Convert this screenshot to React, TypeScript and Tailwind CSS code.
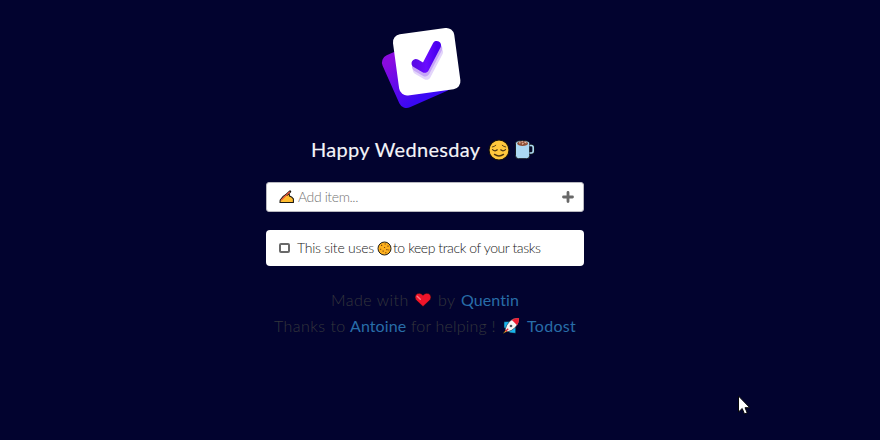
import React from "react";

function Logo() {
  return (
    <svg width="100" height="100" viewBox="0 0 100 100" className="block">
      <defs>
        <linearGradient id="back" x1="0" y1="0" x2="0.25" y2="1">
          <stop offset="0.15" stopColor="#8a0be0" />
          <stop offset="0.95" stopColor="#3a08f4" />
        </linearGradient>
        <linearGradient id="tick" x1="1" y1="0" x2="0" y2="0">
          <stop offset="0" stopColor="#4a00f0" />
          <stop offset="0.5" stopColor="#6a0cff" />
          <stop offset="1" stopColor="#5b08e8" />
        </linearGradient>
      </defs>
      <rect x="18.5" y="24.5" width="57" height="57" rx="8" fill="url(#back)" transform="rotate(-24 47 53)" />
      <rect x="25.8" y="10.8" width="61.8" height="61.8" rx="8" fill="#fff" transform="rotate(-7.7 56.7 41.7)" />
      <g fill="none" strokeWidth="8.6" strokeLinecap="round" strokeLinejoin="round">
        <path d="M47 50L56.5 55.5L68.8 32" stroke="#e3d5fb" />
        <path d="M46.3 47L55.3 52.2L68 28.5" stroke="#c6a6f6" />
        <path d="M45.8 43.3L54.7 48.5L66.8 25.2" stroke="url(#tick)" />
      </g>
    </svg>
  );
}

function Relieved() {
  return (
    <svg width="22" height="22" viewBox="0 0 22 22">
      <circle cx="11" cy="11" r="10" fill="#ffc83d" stroke="#17120a" strokeWidth="1.1" />
      <g fill="none" stroke="#4c3510" strokeWidth="1.2" strokeLinecap="round">
        <path d="M4.5 10.6Q7 12.8 9.3 10.8M12.7 10.8Q15 12.8 17.5 10.6" />
        <path d="M4.3 8Q6.2 7.8 7.8 6.3M14.2 6.3Q15.8 7.8 17.7 8" strokeWidth="0.9" />
        <path d="M6.5 15.4Q11 18.6 15.5 15.4" strokeWidth="1.4" />
      </g>
    </svg>
  );
}

function Cup() {
  return (
    <svg width="22" height="22" viewBox="0 0 22 22">
      <path d="M15.5 6.5H17.2Q19.2 6.5 19.2 8.5V12Q19.2 14 17.2 14H15.5" fill="none" stroke="#151a20" strokeWidth="3" />
      <path d="M1.5 4.2Q1.5 1.5 8.5 1.5Q15.7 1.5 15.7 4.2V16.6Q15.7 19.7 12.7 19.7H4.5Q1.5 19.7 1.5 16.6Z" fill="#acd9f3" stroke="#151a20" strokeWidth="1" />
      <path d="M15.5 6.5H17.2Q19.2 6.5 19.2 8.5V12Q19.2 14 17.2 14H15.5" fill="none" stroke="#acd9f3" strokeWidth="1.6" />
      <ellipse cx="8.6" cy="4.5" rx="5.4" ry="2.4" fill="#8e5036" />
      <path d="M5 4L6.5 3.6M8 5.2L9.5 4.3M10.5 3.3L12.5 4M7.5 2.8H9" stroke="#f0c2a9" strokeWidth="1.1" />
    </svg>
  );
}

function WritingHand() {
  return (
    <svg width="15" height="14" viewBox="0 0 15 14">
      <path d="M1 12.5L1.2 10L4.2 6.4Q6.5 4 9.3 4Q11 4.4 10.4 6L12.5 6.9L14.4 8.8V12.5Z" fill="#ffbd2e" stroke="#1b1812" strokeWidth="1.1" strokeLinejoin="round" />
      <path d="M7.5 4.8L11 1.6" stroke="#1b1812" strokeWidth="2.4" strokeLinecap="round" />
      <path d="M2 10.4L10.8 1.8" stroke="#e8543a" strokeWidth="1.3" />
    </svg>
  );
}

function Cookie() {
  return (
    <svg width="15" height="15" viewBox="0 0 15 15">
      <circle cx="7.5" cy="7.5" r="6.5" fill="#fdb01e" stroke="#252018" strokeWidth="1" />
      <g fill="#7d4812">
        <path d="M4 3.8h1.2v1.2H4zM7.6 2.6h1.2v1H7.6zM10.4 4.6h1.2v1.2h-1.2zM7 6h1.1v1H7zM3 7.8h1.2v1H3zM9.3 8h1.2v1.2H9.3zM5.6 9.6h1.1v1.1H5.6zM8.2 11.2h1.2v1H8.2zM11.3 8.5h.9v1h-.9z" />
      </g>
    </svg>
  );
}

function Heart() {
  return (
    <svg width="18" height="16" viewBox="0 0 18 16">
      <path d="M9 14.6L1.8 7.8Q.1 5 2 2.4Q5.7 -.2 9 3.2Q12.3 -.2 16 2.4Q17.9 5 16.2 7.8Z" fill="#f0142a" stroke="#150b12" strokeWidth="0.6" />
      <path d="M3.2 4.2L6.3 7.2" stroke="#ff7382" strokeWidth="1.4" strokeLinecap="round" />
    </svg>
  );
}

function Rocket() {
  return (
    <svg width="18" height="18" viewBox="0 0 18 18">
      <path d="M2 4.8L7.5 4.4L13.7 11V16.3L8 15.8L2 10.5Z" fill="#19b5ee" stroke="#10151c" strokeWidth="0.5" />
      <path d="M5 11.2L0.8 16.8L7 13.6Z" fill="#ffb32c" stroke="#10151c" strokeWidth="0.5" />
      <path d="M17 1Q11.5.5 7.6 4.4Q4 8.2 3.2 12.4L5.5 14.8Q9.8 13.9 13.4 10.3Q17.5 6 17 1Z" fill="#f5f4f2" stroke="#10151c" strokeWidth="0.5" />
      <path d="M17 1Q13 .7 9.8 2.9L15.2 8.2Q17.3 4.6 17 1Z" fill="#ee1b32" />
      <circle cx="9" cy="9" r="1.3" fill="#49515b" />
      <path d="M3.6 14.2L6.2 11.8" stroke="#e12636" strokeWidth="1.4" />
    </svg>
  );
}

export default function App() {
  return (
    <div className="relative h-[440px] w-[880px] overflow-hidden bg-[#02032f] font-['Lato',sans-serif]">
      <main className="ml-[266px] flex w-[318px] flex-col">
        <div className="ml-[104px] mt-5 h-[100px]">
          <Logo />
        </div>

        <h1 className="ml-[44px] mt-[16px] flex h-7 items-center text-[20px] font-normal leading-7 text-[#f4f4f8] [-webkit-text-stroke:0.15px_#f4f4f8]">
          <span className="mb-[2px] w-[178px] whitespace-nowrap pl-px tracking-[0.32px]">Happy Wednesday</span>
          <span className="w-[26px]"><Relieved /></span>
          <Cup />
        </h1>

        <div className="mt-[18px] flex h-[30px] items-center rounded-[3px] border border-[#b9b9c0] bg-white pl-[12px] pr-[9px]">
          <WritingHand />
          <span className="mb-px ml-[4px] flex-1 text-[14px] font-light leading-5 tracking-[-0.4px] text-[#757575]">Add item...</span>
          <svg width="12" height="12" viewBox="0 0 12 12"><path d="M6 1.5V10.5M1.5 6H10.5" stroke="#686868" strokeWidth="2.8" strokeLinecap="round" /></svg>
        </div>

        <div className="mt-[18px] flex h-9 items-center rounded-[4px] bg-white pl-[13px] text-[14px] font-light leading-5 tracking-[-0.42px] text-[#202020]">
          <span className="h-[10px] w-[11px] rounded-[2px] border-2 border-[#696969]" />
          <span className="ml-[7px] w-[80px] whitespace-nowrap tracking-[-0.25px]">This site uses</span>
          <Cookie />
          <span className="ml-px whitespace-nowrap">to keep track of your tasks</span>
        </div>

        <footer className="mt-[21px] text-[16px] font-light leading-[26px] text-[#35373c]">
          <div className="ml-[65px] flex h-[26px] items-center whitespace-nowrap">
            <span className="w-[83px] tracking-[0.5px]">Made with</span>
            <Heart />
            <span className="ml-[6px] w-[23px] tracking-[0.3px]">by</span>
            <a className="font-normal tracking-[0.1px] text-[#286da8]">Quentin</a>
          </div>
          <div className="ml-[8px] flex h-[26px] items-center whitespace-nowrap">
            <span className="w-[76px] tracking-[0.45px]">Thanks to</span>
            <a className="w-[61px] font-normal tracking-[0.1px] text-[#286da8]">Antoine</a>
            <span className="w-[91px] tracking-[0.2px]">for helping !</span>
            <Rocket />
            <a className="ml-[7px] font-normal tracking-[0.3px] text-[#286da8]">Todost</a>
          </div>
        </footer>
      </main>

      <svg className="absolute left-[737px] top-[394px]" width="14" height="22" viewBox="0 0 14 22">
        <path d="M1.5 2V18L5.2 14.5L7.5 20L10.2 18.8L8 13.7H12.8Z" fill="#fff" stroke="#090909" strokeWidth="1" />
      </svg>
    </div>
  );
}
